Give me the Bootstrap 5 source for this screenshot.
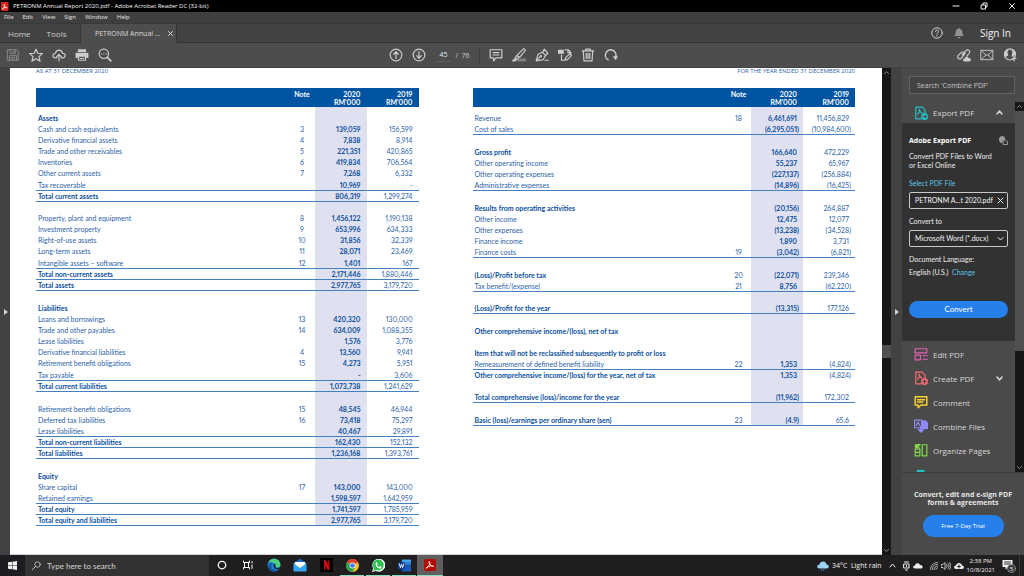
<!DOCTYPE html>
<html lang="en">
<head>
<meta charset="utf-8">
<meta name="viewport" content="width=device-width, initial-scale=1">
<title>PETRONM Annual Report 2020.pdf - Adobe Acrobat Reader DC (32-bit)</title>
<link rel="stylesheet" href="https://cdn.jsdelivr.net/npm/bootstrap@5.3.0/dist/css/bootstrap.min.css">
<style>
:root{--panel:#4d4d4d;--edge:#424242;--track:#171717;--ink:#0a4f9e;--soft:#2c62a9;--head:#0054a1;--tint:#e0e1f0}
body{height:100vh;overflow:hidden;background:var(--edge);color:#e6e6e6;font:7px/9px "Open Sans","Noto Sans",sans-serif}
svg{display:block;flex:none;fill:none;stroke:currentColor;stroke-width:1.5;stroke-linecap:round;stroke-linejoin:round}
svg .solid{fill:currentColor;stroke:none}
button{color:inherit;background:none;border:0;padding:0;line-height:inherit}
.titlebar{height:12px;background:#000;font-size:6px;color:#f4f4f4;padding-left:1px}
.menubar{height:12px;background:#3f3f3f;border-bottom:1px solid #393939;gap:9px}
.menubar button{font-size:6px}
.tabstrip{height:19px;background:var(--edge);color:#cfcfcf;font-size:8px}
.tabstrip .rest{border-bottom:1px solid #343434}
.tab-home{width:81px;gap:16px;padding-left:8px;border-right:1px solid #353535}
.tab-doc{width:96px;background:var(--panel);font-size:7px;color:#dcdcdc;border-right:1px solid #353535;padding-left:14px}
.account{gap:10px;padding-right:13px}
.signin{font-size:10px;color:#f2f2f2;margin-left:5px}
.toolbar{height:25px;background:var(--panel);border-bottom:1px solid #424242;color:#cdcdcd;padding:0 7px 0 6px}
.toolbar svg{width:14px;height:14px}
.tools{gap:9px}
.pageno{width:16px;height:13px;padding:0;border:0;border-bottom:1px solid #5c5c5c;border-radius:0;background:transparent;color:#dff0ff;font-size:7px;text-align:center}
.divline{width:1px;height:15px;background:#3a3a3a}
.gutter{width:10px;flex:none;background:var(--edge);color:#d0d0d0}
.paper{background:#fff;color:var(--soft);padding:0 27px 0 26px;column-gap:54px;font-family:Lato,"Open Sans",sans-serif;border-bottom:1px solid #d2d6d6}
.period{font:6px/8px "Open Sans",sans-serif;margin:-1px 0 13px}
.track{width:9px;background:var(--track);color:#8d8d8d}
.track .thumb{background:#505050}
.track button{height:9px}
/* statements */
.ledger{table-layout:fixed;border-collapse:separate;border-spacing:0;margin:0;color:inherit;line-height:10px;width:100%;font-variant-numeric:proportional-nums}
.ledger td,.ledger th{height:11px;padding:0 2px;border:0;border-top:1px solid transparent;white-space:nowrap;font-weight:400}
.ledger thead th{height:19px;background:var(--head);color:#fff;font-weight:700;line-height:8px;vertical-align:middle;font-size:7px}
.ledger .c-note{width:25px}.ledger .c-year{width:52px}
.ledger th:nth-child(2),.ledger td:nth-child(2){text-align:center;padding:0}
.ledger tr>:nth-child(n+3){text-align:right;padding-right:6px}
.ledger tbody tr>:nth-child(n+3).neg{padding-right:4px}
.ledger tbody td:nth-child(3){background:var(--tint);color:var(--ink);font-weight:700}
.ledger .lead-in>*{height:5px;line-height:4px}
.ledger .gap12>*{height:12px}
.ledger .sum>*{border-top-color:#4482bf}
.ledger .bold th{font-weight:700;color:var(--ink)}
.ledger .end>*{height:1px;line-height:0}
/* tools pane */
.pane{width:123px;background:#4a4a4a;border-left:1px solid #454545}
.search{margin:8px 9px 8px 7px;height:19px;padding:0 7px;border:1px solid #626262;border-radius:0;background:#434343;font-size:7px;color:#ddd}
.search::placeholder{color:#c4c4c4;opacity:1}
.tool{height:24px;padding:0 12px;gap:5px;font-size:8px;color:#d8d8d8;text-align:left}
.tool.open{height:21px}
.tool .ico{width:14px;height:14px}
.tool-list{padding-top:1px}
.export{background:#323232;padding:13px 7px 23px;font-family:Lato,"Open Sans",sans-serif;color:#eee}
.export h2{font:700 7px/9px "Open Sans",sans-serif;margin:0;color:#fff}
.export .blurb{margin:-1px 0 9px}
.export a{color:#5fc3e6;text-decoration:none}
.field{height:17px;border:1px solid #c9c9c9;border-radius:2px;padding:0 3px 0 5px;background:#2c2c2c;color:#f4f4f4;font-size:7px}
.field select{appearance:none;background:transparent;border:0;color:inherit;font-size:7px;padding:0;flex:1;min-width:0;outline:0}
.pill{background:#2680eb;color:#fff;border-radius:11px}
.pill.wide{height:17px;font:8px/17px Lato,sans-serif}
.pill.trial{width:81px;height:22px;font-size:6px}
.promo{height:83px;border-top:1px solid #3b3b3b}
/* taskbar */
.taskbar{height:21px;background:#211e20;color:#f0f0f0}
.start{width:25px;background:#1c1d21}
.tb-search{width:184px;background:#323232;gap:6px;padding-left:7px;color:#d4d4d4}
.tb-search input{background:transparent;border:0;padding:0;width:120px;font:8px/12px Lato,sans-serif;color:inherit}
.tb-search input::placeholder{color:#d4d4d4;opacity:1}
.app{width:26px;height:21px;border-bottom:1px solid transparent}
.app svg{stroke:none}
.app.running{border-image:linear-gradient(90deg,transparent 8%,#86e0bb 8% 92%,transparent 92%) 1}
.app.active{background:#625e60;border-image:linear-gradient(#86e0bb,#86e0bb) 1}
.tray{gap:3px}
.clock{font-size:6px;line-height:9px}
</style>
</head>
<body class="d-flex flex-column">
<header class="titlebar d-flex align-items-center pe-1 flex-shrink-0">
  <svg class="me-1" width="8" height="9" viewBox="0 0 16 18" stroke="#fff"><rect width="15" height="18" rx="2" fill="#d8251d" stroke="none"/><path d="M3 14C7 10 8 7 7 5s-2 2 1 5 5 2 4 1-6 0-9 3"/></svg>
  <span class="me-auto">PETRONM Annual Report 2020.pdf - Adobe Acrobat Reader DC (32-bit)</span>
  <button class="me-3" aria-label="Minimize"><svg width="8" height="8" viewBox="0 0 8 8"><path d="M1 4h6" stroke-width="1"/></svg></button>
  <button class="mx-1" aria-label="Restore"><svg width="8" height="8" viewBox="0 0 8 8"><path d="M1.500 3h4v4h-4zM3 2.500V1h4v4H6" stroke-width="1"/></svg></button>
  <button class="ms-3 me-1" aria-label="Close"><svg width="8" height="8" viewBox="0 0 8 8"><path d="M1.500 1.500l5 5m0-5l-5 5" stroke-width="1"/></svg></button>
</header>
<nav class="menubar d-flex align-items-center px-1 flex-shrink-0" aria-label="Menu">
  <button>File</button><button>Edit</button><button>View</button><button>Sign</button><button>Window</button><button>Help</button>
</nav>
<div class="tabstrip d-flex flex-shrink-0">
  <div class="tab-home rest d-flex align-items-center"><button>Home</button><button>Tools</button></div>
  <div class="tab-doc d-flex align-items-center"><span>PETRONM Annual ...</span><button class="ms-2" aria-label="Close tab"><svg width="5" height="5" viewBox="0 0 5 5"><path d="M.5.5l4 4m0-4l-4 4" stroke-width="1"/></svg></button></div>
  <div class="rest account flex-grow-1 d-flex align-items-center justify-content-end">
    <button aria-label="Help"><svg width="12" height="12" viewBox="0 0 24 24"><g stroke-width="2"><circle cx="12" cy="12" r="10.500"/><path d="M9 9c0-4 6-4 6 0 0 2-3 2-3 5m0 3v1"/></g></svg></button>
    <button aria-label="Notifications"><svg width="12" height="12" viewBox="0 0 24 24" color="#929292"><path class="solid" d="M12 2a2 2 0 0 1 2 2c4 1 5 4 5 8 0 3 1 4 3 6H2c2-2 3-3 3-6 0-4 1-7 5-8a2 2 0 0 1 2-2M9 20h6a3 2.500 0 0 1-6 0"/></svg></button>
    <button class="signin">Sign In</button>
  </div>
</div>
<div class="toolbar d-flex align-items-center flex-shrink-0">
  <div class="tools d-flex align-items-center flex-fill w-25">
    <button aria-label="Save"><svg viewBox="0 0 24 24" color="#8f8f8f"><path d="M3 3h15l3 3v15H3zM7 3v6h9V3M6 21v-8h12v8M13 5v2M9 16h6M9 19h6"/></svg></button>
    <button aria-label="Star"><svg viewBox="0 0 24 24"><path stroke-width="2" d="M12 2l3 7 8 .6-6 5.200 2 7.700-7-4.200-7 4.200 2-7.700-6-5.200 8-.6z"/></svg></button>
    <button aria-label="Upload"><svg viewBox="0 0 24 24"><path stroke-width="2" d="M8 17H5c-5-1-4-8 1-8 1-7 11-7 12 0 6 0 6 7 1 8h-3M12 22V11m-4 4l4-4 4 4"/></svg></button>
    <button aria-label="Print"><svg viewBox="0 0 24 24"><path class="solid" d="M5 2h14v5H5zM1 8h22v9h-4v-3H5v3H1z"/><path stroke-width="2" d="M6 14h12v7H6zM9 18h6"/></svg></button>
    <button aria-label="Search"><svg viewBox="0 0 24 24"><circle cx="10" cy="10" r="8" stroke-width="2"/><path stroke-width="3" d="M16 16l6 6"/><path stroke-width="2" d="M6 10h.1m3.900 0h.1m3.900 0h.1"/></svg></button>
  </div>
  <div class="tools d-flex align-items-center me-3">
    <button aria-label="Previous page"><svg viewBox="0 0 24 24"><g stroke-width="2"><circle cx="12" cy="12" r="10"/><path d="M12 18V6m-4 5l4-5 4 5"/></g></svg></button>
    <button aria-label="Next page"><svg viewBox="0 0 24 24"><g stroke-width="2"><circle cx="12" cy="12" r="10"/><path d="M12 6v12m-4-5l4 5 4-5"/></g></svg></button>
    <div class="d-flex align-items-center gap-1"><input class="pageno" value="45" aria-label="Page number"><span>/ &nbsp;76</span></div>
    <span class="divline"></span>
    <button aria-label="Comment"><svg viewBox="0 0 24 24"><path stroke-width="2" d="M2 3h20v14H12l-4 5v-5H2zM7 8h10M7 12h10"/></svg></button>
    <button aria-label="Highlight"><svg viewBox="0 0 24 24"><path class="solid" opacity=".4" d="M9 18h15v5H9z"/><path stroke-width="2" d="M20 1l3 3-10 12-5-3zM8 13l-3 5 3 1 5-3M1 22l4-4 3 2-3 2z"/></svg></button>
    <button aria-label="Sign"><svg viewBox="0 0 24 24"><path stroke-width="2" d="M2 22l3-11 8-4 5 6-4 7zM2 22l8-8M13 7l3-5 6 7-4 4M17 21h6"/><circle class="solid" cx="10" cy="14" r="2"/></svg></button>
    <button aria-label="Stamp and edit"><svg viewBox="0 0 24 24"><path class="solid" d="M0 3h10v7H0z"/><path stroke-width="2" d="M12 3h6l4 5v3M6 12v9h7M17 3v5h5M12 21l1-4 7-7 3 3-7 7z"/></svg></button>
    <button aria-label="Delete"><svg viewBox="0 0 24 24"><path stroke-width="2" d="M2 5h20M8 5V2h8v3M4 5l1 17h14l1-17M9 9v9m3-9v9m3-9v9"/></svg></button>
    <button aria-label="Rotate"><svg viewBox="0 0 24 24"><path stroke-width="2.500" d="M7 20A9 9 0 1 1 20 15"/><path class="solid" d="M15 14h9l-4 7z"/></svg></button>
  </div>
  <div class="tools d-flex align-items-center justify-content-end flex-fill w-25">
    <button aria-label="Copy link"><svg viewBox="0 0 24 24"><path stroke-width="2" d="M9 12l6-7c3-4 9 0 6 4l-4 5M14 9l-6 8c-3 4-9 0-6-4l5-5c2-2 5-1 6 1"/><path class="solid" d="M13 23c-4 0-3-5 0-5 1-4 6-4 7-1 5 0 5 6 1 6z"/></svg></button>
    <button aria-label="Email"><svg viewBox="0 0 24 24"><path stroke-width="1.500" d="M2 4h20v16H2zM2 4l8 8h4l8-8M2 20l8-8m12 8l-8-8"/></svg></button>
    <button aria-label="Share"><svg viewBox="0 0 24 24"><circle cx="12" cy="11" r="9.500" stroke-width="2"/><path class="solid" d="M2 10C4 2 9 2 12 3c-5 0-5 5-3 9-1 3-5 2-5 4zM22 10c-2-8-7-8-10-7 5 0 5 5 3 9v3l3-1zM18 14h2v3h3v2h-3v4h-2v-4h-3v-2h3z"/></svg></button>
  </div>
</div>

<main class="d-flex flex-grow-1 overflow-hidden">
  <div class="gutter d-flex align-items-center"><button class="ms-1" aria-label="Open pages pane"><svg width="4" height="6" viewBox="0 0 4 6"><path class="solid" d="M0 0l4 3-4 3z"/></svg></button></div>
  <article class="paper d-flex flex-grow-1 overflow-hidden">
    <section class="flex-fill w-50">
      <p class="period">AS AT 31 DECEMBER 2020</p>
      <table class="ledger">
        <colgroup><col><col class="c-note"><col class="c-year"><col class="c-year"></colgroup>
        <thead><tr><th></th><th>Note<br>&nbsp;</th><th>2020<br>RM'000</th><th>2019<br>RM'000</th></tr></thead>
        <tbody>
        <tr class="lead-in"><td></td><td></td><td></td><td></td></tr>
        <tr class="bold"><th>Assets</th><td></td><td></td><td></td></tr>
        <tr><th>Cash and cash equivalents</th><td>3</td><td>139,059</td><td>156,599</td></tr>
        <tr><th>Derivative financial assets</th><td>4</td><td>7,838</td><td>8,914</td></tr>
        <tr><th>Trade and other receivables</th><td>5</td><td>221,351</td><td>420,865</td></tr>
        <tr><th>Inventories</th><td>6</td><td>419,834</td><td>706,564</td></tr>
        <tr><th>Other current assets</th><td>7</td><td>7,268</td><td>6,332</td></tr>
        <tr class="gap12"><th>Tax recoverable</th><td></td><td>10,969</td><td>-</td></tr>
        <tr class="bold sum"><th>Total current assets</th><td></td><td>806,319</td><td>1,299,274</td></tr>
        <tr class="sum"><td></td><td></td><td></td><td></td></tr>
        <tr><th>Property, plant and equipment</th><td>8</td><td>1,456,122</td><td>1,190,138</td></tr>
        <tr><th>Investment property</th><td>9</td><td>653,996</td><td>634,333</td></tr>
        <tr><th>Right-of-use assets</th><td>10</td><td>31,856</td><td>32,339</td></tr>
        <tr><th>Long-term assets</th><td>11</td><td>28,071</td><td>23,469</td></tr>
        <tr class="gap12"><th>Intangible assets – software</th><td>12</td><td>1,401</td><td>167</td></tr>
        <tr class="bold sum"><th>Total non-current assets</th><td></td><td>2,171,446</td><td>1,880,446</td></tr>
        <tr class="bold sum"><th>Total assets</th><td></td><td>2,977,765</td><td>3,179,720</td></tr>
        <tr class="sum gap12"><td></td><td></td><td></td><td></td></tr>
        <tr class="bold"><th>Liabilities</th><td></td><td></td><td></td></tr>
        <tr><th>Loans and borrowings</th><td>13</td><td>420,320</td><td>130,000</td></tr>
        <tr><th>Trade and other payables</th><td>14</td><td>634,009</td><td>1,088,355</td></tr>
        <tr><th>Lease liabilities</th><td></td><td>1,576</td><td>3,776</td></tr>
        <tr><th>Derivative financial liabilities</th><td>4</td><td>13,560</td><td>9,941</td></tr>
        <tr><th>Retirement benefit obligations</th><td>15</td><td>4,273</td><td>5,951</td></tr>
        <tr class="gap12"><th>Tax payable</th><td></td><td>-</td><td>3,606</td></tr>
        <tr class="bold sum"><th>Total current liabilities</th><td></td><td>1,073,738</td><td>1,241,629</td></tr>
        <tr class="sum gap12"><td></td><td></td><td></td><td></td></tr>
        <tr><th>Retirement benefit obligations</th><td>15</td><td>48,545</td><td>46,944</td></tr>
        <tr><th>Deferred tax liabilities</th><td>16</td><td>73,418</td><td>75,297</td></tr>
        <tr><th>Lease liabilities</th><td></td><td>40,467</td><td>29,891</td></tr>
        <tr class="bold sum"><th>Total non-current liabilities</th><td></td><td>162,430</td><td>152,132</td></tr>
        <tr class="bold sum"><th>Total liabilities</th><td></td><td>1,236,168</td><td>1,393,761</td></tr>
        <tr class="sum gap12"><td></td><td></td><td></td><td></td></tr>
        <tr class="bold"><th>Equity</th><td></td><td></td><td></td></tr>
        <tr><th>Share capital</th><td>17</td><td>143,000</td><td>143,000</td></tr>
        <tr><th>Retained earnings</th><td></td><td>1,598,597</td><td>1,642,959</td></tr>
        <tr class="bold sum"><th>Total equity</th><td></td><td>1,741,597</td><td>1,785,959</td></tr>
        <tr class="bold sum"><th>Total equity and liabilities</th><td></td><td>2,977,765</td><td>3,179,720</td></tr>
        <tr class="sum end"><td></td><td></td><td></td><td></td></tr>
        </tbody>
      </table>
    </section>
    <section class="flex-fill w-50">
      <p class="period text-end">FOR THE YEAR ENDED 31 DECEMBER 2020</p>
      <table class="ledger">
        <colgroup><col><col class="c-note"><col class="c-year"><col class="c-year"></colgroup>
        <thead><tr><th></th><th>Note<br>&nbsp;</th><th>2020<br>RM'000</th><th>2019<br>RM'000</th></tr></thead>
        <tbody>
        <tr class="lead-in"><td></td><td></td><td></td><td></td></tr>
        <tr><th>Revenue</th><td>18</td><td>6,461,691</td><td>11,456,829</td></tr>
        <tr><th>Cost of sales</th><td></td><td class="neg">(6,295,051)</td><td class="neg">(10,984,600)</td></tr>
        <tr class="sum"><td></td><td></td><td></td><td></td></tr>
        <tr class="bold gap12"><th>Gross profit</th><td></td><td>166,640</td><td>472,229</td></tr>
        <tr><th>Other operating income</th><td></td><td>55,237</td><td>65,967</td></tr>
        <tr><th>Other operating expenses</th><td></td><td class="neg">(227,137)</td><td class="neg">(256,884)</td></tr>
        <tr><th>Administrative expenses</th><td></td><td class="neg">(14,896)</td><td class="neg">(16,425)</td></tr>
        <tr class="sum"><td></td><td></td><td></td><td></td></tr>
        <tr class="bold gap12"><th>Results from operating activities</th><td></td><td class="neg">(20,156)</td><td>264,887</td></tr>
        <tr><th>Other income</th><td></td><td>12,475</td><td>12,077</td></tr>
        <tr><th>Other expenses</th><td></td><td class="neg">(13,238)</td><td class="neg">(34,528)</td></tr>
        <tr><th>Finance income</th><td></td><td>1,890</td><td>3,731</td></tr>
        <tr><th>Finance costs</th><td>19</td><td class="neg">(3,042)</td><td class="neg">(6,821)</td></tr>
        <tr class="sum"><td></td><td></td><td></td><td></td></tr>
        <tr class="bold gap12"><th>(Loss)/Profit before tax</th><td>20</td><td class="neg">(22,071)</td><td>239,346</td></tr>
        <tr><th>Tax benefit/(expense)</th><td>21</td><td>8,756</td><td class="neg">(62,220)</td></tr>
        <tr class="sum"><td></td><td></td><td></td><td></td></tr>
        <tr class="bold"><th>(Loss)/Profit for the year</th><td></td><td class="neg">(13,315)</td><td>177,126</td></tr>
        <tr class="sum gap12"><td></td><td></td><td></td><td></td></tr>
        <tr class="bold"><th>Other comprehensive income/(loss), net of tax</th><td></td><td></td><td></td></tr>
        <tr><td></td><td></td><td></td><td></td></tr>
        <tr class="bold"><th>Item that will not be reclassified subsequently to profit or loss</th><td></td><td></td><td></td></tr>
        <tr><th>Remeasurement of defined benefit liability</th><td>22</td><td>1,353</td><td class="neg">(4,824)</td></tr>
        <tr class="bold sum"><th>Other comprehensive income/(loss) for the year, net of tax</th><td></td><td>1,353</td><td class="neg">(4,824)</td></tr>
        <tr><td></td><td></td><td></td><td></td></tr>
        <tr class="bold"><th>Total comprehensive (loss)/income for the year</th><td></td><td class="neg">(11,962)</td><td>172,302</td></tr>
        <tr class="sum"><td></td><td></td><td></td><td></td></tr>
        <tr class="bold gap12"><th>Basic (loss)/earnings per ordinary share (sen)</th><td>23</td><td class="neg">(4.9)</td><td>65.6</td></tr>
        <tr class="sum end"><td></td><td></td><td></td><td></td></tr>
        </tbody>
      </table>
    </section>
  </article>
  <div class="track d-flex flex-column align-items-center flex-shrink-0">
    <button aria-label="Scroll up"><svg width="5" height="9" viewBox="0 0 5 9"><path d="M.5 5.500l2-2 2 2" stroke-width="1"/></svg></button>
    <div style="flex:267"></div><div class="thumb w-100" style="height:13px"></div><div style="flex:188"></div>
    <button aria-label="Scroll down"><svg width="5" height="9" viewBox="0 0 5 9"><path d="M.5 3.500l2 2 2-2" stroke-width="1"/></svg></button>
  </div>
  <div class="gutter d-flex align-items-center"><button class="ms-1" aria-label="Collapse tools pane"><svg width="4" height="6" viewBox="0 0 4 6"><path class="solid" d="M0 0l4 3-4 3z"/></svg></button></div>
  <aside class="pane d-flex flex-column flex-shrink-0">
    <input class="search" type="search" placeholder="Search 'Combine PDF'" aria-label="Search tools">
    <div class="d-flex flex-grow-1 overflow-hidden">
      <div class="flex-grow-1 overflow-hidden">
        <button class="tool open d-flex align-items-center w-100"><svg class="ico" viewBox="0 0 24 24" color="#22c1c6"><path stroke-width="2" d="M12 22H3V2h11l5 5v5M6 14c4-3 4-7 3-8s-1 3 5 6"/><circle class="solid" cx="18" cy="18" r="6"/><path stroke="#4a4a4a" stroke-width="2" d="M15 18h6m-2-2l2 2-2 2"/></svg><span class="flex-grow-1">Export PDF</span><svg width="7" height="7" viewBox="0 0 7 7"><path d="M1 5l2.500-3L6 5"/></svg></button>
        <div class="export">
          <div class="d-flex justify-content-between mb-2"><h2>Adobe Export PDF</h2><svg width="9" height="9" viewBox="0 0 18 18" color="#999"><path class="solid" d="M7 0a7 7 0 1 0 0 14V8h5V4a6 6 0 0 0-5-4"/><path d="M9 8h4l4 4v5H9z" stroke-width="2"/></svg></div>
          <p class="blurb">Convert PDF Files to Word<br>or Excel Online</p>
          <a class="d-block mb-1" href="#">Select PDF File</a>
          <div class="field d-flex align-items-center justify-content-between"><span>PETRONM A...t 2020.pdf</span><button aria-label="Remove file"><svg width="7" height="7" viewBox="0 0 7 7"><path d="M1 1l5 5m0-5l-5 5" stroke-width="1"/></svg></button></div>
          <label class="d-block mt-2 mb-1" for="fmt">Convert to</label>
          <div class="field d-flex align-items-center"><select id="fmt"><option>Microsoft Word (*.docx)</option></select><svg width="7" height="7" viewBox="0 0 7 7"><path d="M1 2.500L3.500 5 6 2.500" stroke-width="1"/></svg></div>
          <div class="mt-2">Document Language:</div>
          <div class="mt-1">English (U.S.) &nbsp;<a href="#">Change</a></div>
          <button class="pill wide w-100 mt-4">Convert</button>
        </div>
        <div class="tool-list">
        <button class="tool d-flex align-items-center w-100"><svg class="ico" viewBox="0 0 24 24" color="#e561b4"><path stroke-width="2" d="M2 3h20v7H2zM2 14h9v8H2zM15 15h8M15 21h8"/></svg>Edit PDF</button>
        <button class="tool d-flex align-items-center w-100"><svg class="ico" viewBox="0 0 24 24" color="#fa6b73"><path stroke-width="2" d="M12 22H3V2h11l5 5v5M6 14c4-3 4-7 3-8s-1 3 5 6"/><circle class="solid" cx="18" cy="18" r="6"/><path stroke="#4a4a4a" stroke-width="2" d="M15 18h6m-3-3v6"/></svg><span class="flex-grow-1">Create PDF</span><svg width="7" height="7" viewBox="0 0 7 7"><path d="M1 2l2.500 3L6 2"/></svg></button>
        <button class="tool d-flex align-items-center w-100"><svg class="ico" viewBox="0 0 24 24" color="#f5d22b"><path stroke-width="2.500" d="M2 3h20v14H12l-5 5v-5H2zM6 8h12M6 12h9"/></svg>Comment</button>
        <button class="tool d-flex align-items-center w-100"><svg class="ico" viewBox="0 0 24 24" color="#8f88f5"><path class="solid" d="M12 2h8l4 4v11H12z"/><path stroke-width="2" fill="#4a4a4a" d="M1 2h12v13H1zM4 11l3-6 3 6"/><path stroke-width="3" d="M12 13v9m-4-4l4 4 4-4"/></svg>Combine Files</button>
        <button class="tool d-flex align-items-center w-100"><svg class="ico" viewBox="0 0 24 24" color="#86dc49"><path stroke-width="2" d="M14 3h8v19h-8zM2 10h8v12H2zM2 16h8"/><path stroke-width="3" d="M10 3H6L3 7m0-4v4h5"/></svg>Organize Pages</button>
        <button class="tool d-flex align-items-center w-100" aria-label="More tools"><svg class="ico" viewBox="0 0 24 24" color="#22c1c6"><path class="solid" d="M5 5h13v15H5z"/></svg></button>
        </div>
      </div>
      <div class="track d-flex flex-column align-items-center flex-shrink-0">
        <button aria-label="Scroll tools up"><svg width="5" height="9" viewBox="0 0 5 9"><path d="M.5 5.500l2-2 2 2" stroke-width="1"/></svg></button>
        <div class="thumb w-100" style="flex:239"></div><div style="flex:112"></div>
        <button aria-label="Scroll tools down"><svg width="5" height="9" viewBox="0 0 5 9"><path d="M.5 3.500l2 2 2-2" stroke-width="1"/></svg></button>
      </div>
    </div>
    <div class="promo d-flex flex-column align-items-center justify-content-center flex-shrink-0">
      <p class="text-center fw-bold mb-2" style="line-height:8px">Convert, edit and e-sign PDF<br>forms &amp; agreements</p>
      <button class="pill trial">Free 7-Day Trial</button>
    </div>
  </aside>
</main>

<footer class="taskbar d-flex align-items-center flex-shrink-0">
  <button class="start h-100 d-flex align-items-center justify-content-center" aria-label="Start"><svg width="9" height="9" viewBox="0 0 18 18"><path class="solid" d="M0 2.500l8-1v7H0zM9 1.300L18 0v8.500H9zM0 9.500h8v7l-8-1zM9 9.500h9V18l-9-1.300z"/></svg></button>
  <div class="tb-search h-100 d-flex align-items-center"><svg width="9" height="9" viewBox="0 0 18 18"><circle cx="11" cy="7" r="5.500"/><path stroke-width="2" d="M7 11l-6 6"/></svg><input type="search" placeholder="Type here to search" aria-label="Type here to search"></div>
  <div class="d-flex">
    <button class="app d-flex align-items-center justify-content-center" aria-label="Cortana"><svg width="10" height="10" viewBox="0 0 20 20"><circle cx="10" cy="10" r="7.500" stroke="#fff" stroke-width="2.500"/></svg></button>
    <button class="app d-flex align-items-center justify-content-center" aria-label="Task view"><svg width="10" height="10" viewBox="0 0 20 20"><path stroke="#fff" stroke-width="2" d="M1 2v3h12V2M1 18v-3h12v3M3 5v10M11 5v10M18 3v3M18 10v7"/></svg></button>
    <button class="app d-flex align-items-center justify-content-center" aria-label="Edge"><svg width="14" height="14" viewBox="0 0 24 24"><circle cx="12" cy="12" r="11" fill="#1a83d6"/><path fill="#4ccf7a" d="M3 7C7-2 23 0 23 12c0 4-5 5-8 3 2-5-4-8-12-8"/><path fill="#1556a6" d="M8 12c-2 6 4 11 12 8-6 6-17 3-18-6 0-4 4-7 9-5-2 0-3 2-3 3"/><path fill="#211e20" d="M12 10c3 0 2 4 2 5 2 3 6 3 9 0l-3 4c-6 2-11-4-8-9"/></svg></button>
    <button class="app d-flex align-items-center justify-content-center" aria-label="Mail"><svg width="14" height="14" viewBox="0 0 24 24"><path fill="#1565b8" d="M1 9l11-8 11 8v13H1z"/><path fill="#fff" d="M3 7h18v7l-9 5-9-5z"/><path fill="#36a4ee" d="M1 9l11 8 11-8v14H1z"/></svg></button>
    <button class="app d-flex align-items-center justify-content-center" aria-label="Netflix"><svg width="13" height="14" viewBox="0 0 26 28"><path fill="#000" d="M0 0h26v28H0z"/><path fill="#b20710" d="M8 5h4v18H8zM15 5h4v18h-4z"/><path fill="#e50914" d="M8 5h4l7 18h-4z"/></svg></button>
    <button class="app running d-flex align-items-center justify-content-center" aria-label="Chrome"><svg width="13" height="13" viewBox="0 0 24 24"><circle cx="12" cy="12" r="12" fill="#fbc02d"/><path fill="#e33b2e" d="M12 12L1.600 6a12 12 0 0 1 20.800 0z"/><path fill="#2ba24c" d="M1.600 6A12 12 0 0 0 12 24l5-9-5-3z"/><circle cx="12" cy="12" r="5.500" fill="#fff"/><circle cx="12" cy="12" r="4.300" fill="#3b7ded"/></svg></button>
    <button class="app running d-flex align-items-center justify-content-center" aria-label="WhatsApp"><svg width="13" height="13" viewBox="0 0 24 24"><path fill="#fff" d="M0 24l2-7A12 12 0 1 1 7 22z"/><path fill="#2bc04f" d="M2 22l1.500-5A10 10 0 1 1 8 20.500z"/><path fill="#fff" d="M7 7c2-2 3 0 3 3l-1 1c1 2 3 3 4 4l2-2c3 1 3 2 2 4-5 3-12-4-10-10"/></svg></button>
    <button class="app running d-flex align-items-center justify-content-center" aria-label="Word"><svg width="13" height="13" viewBox="0 0 24 24"><path fill="#41a5ee" d="M7 1h17v6H7z"/><path fill="#2b7cd3" d="M7 7h17v5H7z"/><path fill="#185abd" d="M7 12h17v11H7z"/><path fill="#103f91" d="M0 6h13v13H0z"/><path stroke="#fff" stroke-width="1.600" d="M2.500 9l2 7 2-6 2 6 2-7"/></svg></button>
    <button class="app active d-flex align-items-center justify-content-center" aria-label="Acrobat"><svg width="12" height="12" viewBox="0 0 24 24"><rect width="24" height="24" rx="4" fill="#b30b00"/><path stroke="#fff" stroke-width="1.800" d="M5 18c5-4 8-9 6-13-3 0 0 9 8 10 1-3-9-2-14 3"/></svg></button>
  </div>
  <div class="tray h-100 ms-auto d-flex align-items-center">
    <svg width="12" height="12" viewBox="0 0 24 24"><path fill="#9fd0f5" stroke="none" d="M5 17c-6 0-6-8 0-8 1-8 13-8 14 0 6 0 6 8 0 8z"/><path stroke="#3f8fe0" stroke-width="2" d="M9 19l-1 2m6-2l-1 2"/></svg>
    <span>34°C &nbsp;Light rain</span>
    <button class="ms-1" aria-label="Show hidden icons"><svg width="7" height="7" viewBox="0 0 7 7"><path d="M1 5l2.500-3L6 5" stroke-width="1"/></svg></button>
    <svg class="ms-1" width="7" height="10" viewBox="0 0 14 20"><path stroke-width="2" d="M2 6h10v8H2zM3 2h8M5 18h4M7 9v2"/></svg>
    <svg width="10" height="10" viewBox="0 0 20 20"><path class="solid" d="M4 15c-5 0-5-6 0-6 1-5 8-6 10-1 6-1 7 7 2 7z"/></svg>
    <svg class="ms-1" width="8" height="8" viewBox="0 0 18 18"><path stroke-width="1.500" d="M1 17C1 8 8 1 17 1M5 17C5 10 10 5 17 5M9 17c0-4 4-8 8-8M13 17c0-2 2-4 4-4"/></svg>
    <svg width="10" height="8" viewBox="0 0 20 16"><path d="M1 5h3l4-4v14l-4-4H1zM11 5c2 2 2 4 0 6M14 3c3 3 3 7 0 10M17 1c4 4 4 10 0 14"/></svg>
    <svg width="10" height="10" viewBox="0 0 20 20"><path class="solid" d="M4 16c-5 0-5-7 0-7 1-7 11-7 12 0 5 0 5 7 0 7z"/><path stroke="#211e20" stroke-width="2" d="M10 8v6m-3-3h6"/></svg>
    <div class="clock text-center">2:38 PM<br>10/8/2021</div>
    <button class="ms-1" aria-label="Notifications"><svg width="14" height="14" viewBox="0 0 28 28"><path class="solid" d="M1 2h20v14h-9l-5 5v-5H1z"/><path stroke="#333" stroke-width="2" d="M5 6h12M5 10h12"/><circle cx="19" cy="19" r="8" fill="#333" stroke="#aaa"/><text x="19" y="23" font-size="12" text-anchor="middle" fill="#fff" stroke="none">5</text></svg></button>
    <span class="divline h-100 me-1"></span>
  </div>
</footer>
<script src="https://cdn.jsdelivr.net/npm/bootstrap@5.3.0/dist/js/bootstrap.bundle.min.js"></script>
</body>
</html>
